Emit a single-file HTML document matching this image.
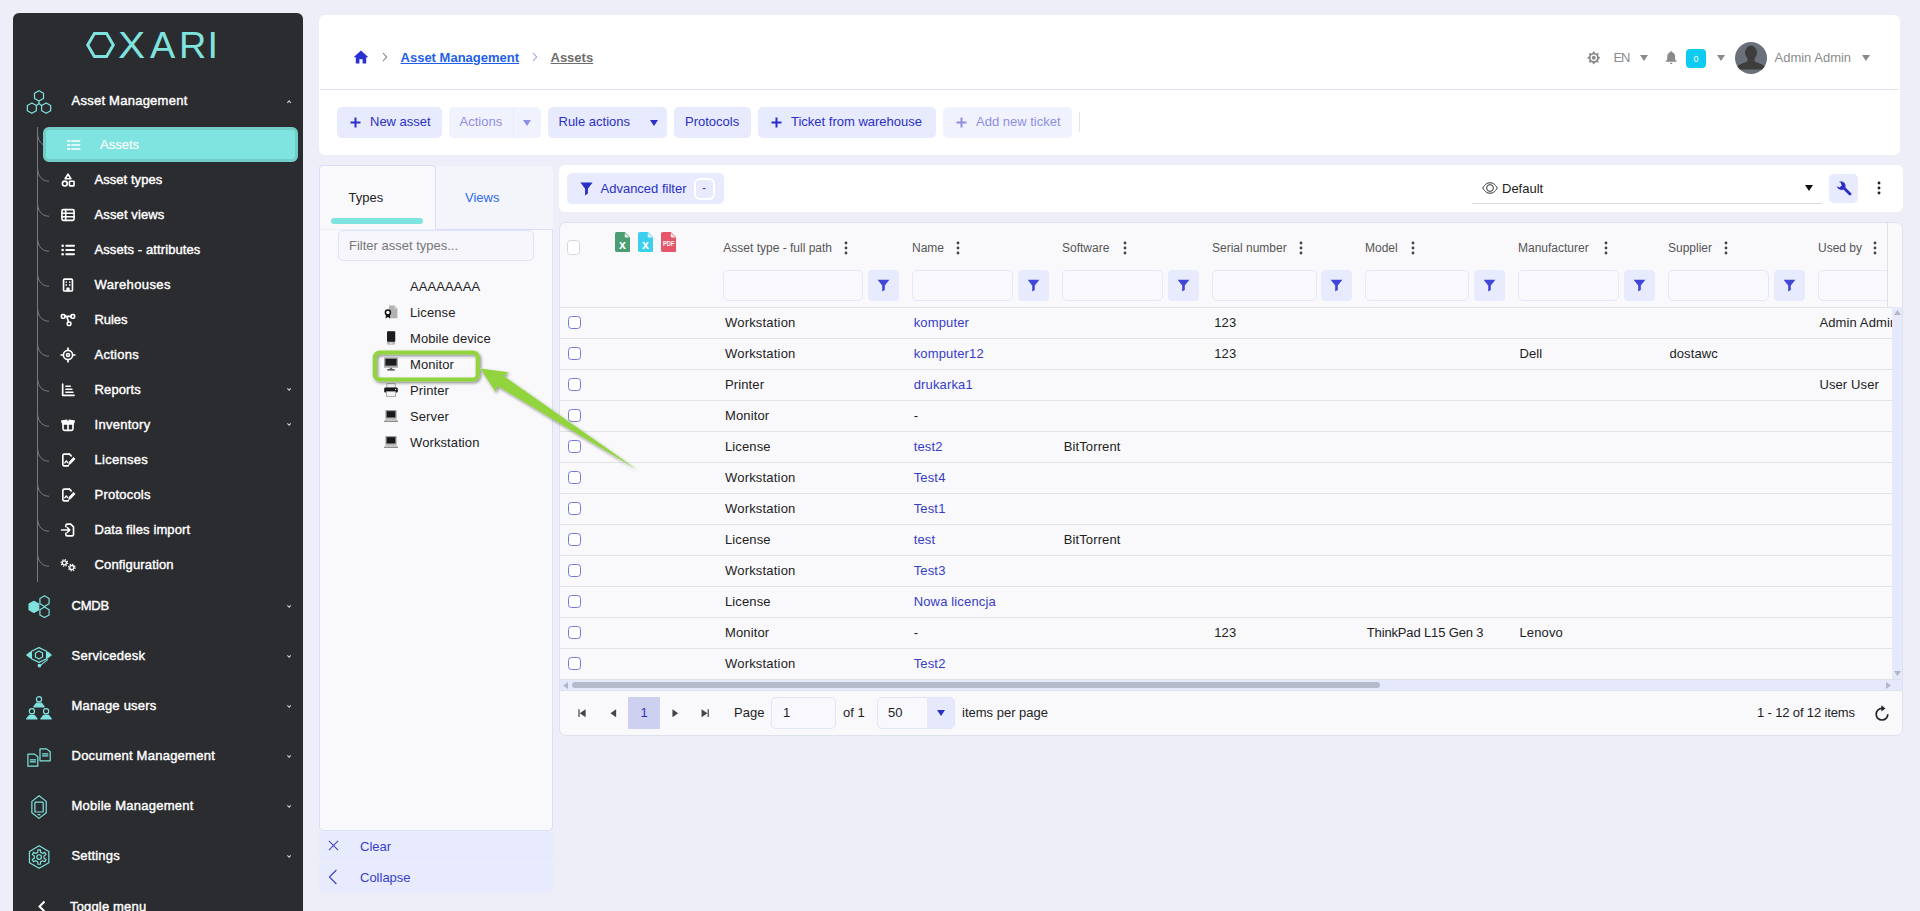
<!DOCTYPE html>
<html lang="en">
<head>
<meta charset="utf-8">
<title>Assets - Asset Management</title>
<style>
*{box-sizing:border-box;margin:0;padding:0}
html,body{width:1920px;height:911px;overflow:hidden}
body{background:#eeeef8;font-family:"Liberation Sans",sans-serif;font-size:13px;color:#222;position:relative}
a{text-decoration:none;color:inherit}
.abs{position:absolute}
svg{display:block}

/* ---------- sidebar ---------- */
#sidebar{position:absolute;left:13px;top:13px;width:290px;height:900px;background:#2b2c2f;border-radius:6px 6px 0 0;color:#fff}
#logo{position:absolute;left:70px;top:17px}
.sec{position:absolute;left:0;width:290px;height:50px}
.sec .ico{position:absolute;left:12px;top:13px;width:28px;height:28px}
.sec .lbl{position:absolute;left:58.5px;top:18px;-webkit-text-stroke:0.4px #fff;font-size:13px;line-height:16px;white-space:nowrap}
.sec .car{position:absolute;left:273px;top:24px;width:6px;height:5px}
.tree-line{position:absolute;left:24px;top:114px;width:1px;height:455px;background:#77797d}
.itm{position:absolute;left:24px;width:266px;height:35px}
.itm .br{position:absolute;left:0;top:0;width:13px;height:20px}
.itm .ico{position:absolute;left:23px;top:10px;width:16px;height:16px}
.itm .lbl{position:absolute;left:57.5px;top:10px;-webkit-text-stroke:0.4px #fff;font-size:13px;line-height:16px;white-space:nowrap}
.itm .car{position:absolute;left:249px;top:15px;width:6px;height:5px}
.itm.sel{left:30px;width:255px;background:#7fe3df;border:3px solid #72cdc9;border-radius:6px;top:114px}
.itm.sel .lbl{-webkit-text-stroke:0.15px #fff;left:54px;top:7px;letter-spacing:0}
.itm.sel .ico{left:19.5px;top:7px}

/* ---------- top panel ---------- */
#top{position:absolute;left:319px;top:15px;width:1581px;height:140px;background:#fff;border-radius:6px}
#top .divider{position:absolute;left:1px;right:1px;top:74px;height:1px;background:#dfe2ea}
.crumb{position:absolute;top:35px;font-size:13px;line-height:16px;font-weight:bold;white-space:nowrap;text-decoration:underline}
.btn{position:absolute;top:92px;height:31px;border-radius:5px;background:#e7ebfd;color:#2b2fc4;font-size:13px;line-height:31px;white-space:nowrap}
.btn.dis{background:#f0f2fe;color:#8d90e0}
.btn span{position:absolute;top:-1px}
.hdr-txt{position:absolute;top:35px;font-size:13px;line-height:16px;color:#8c8c8c;white-space:nowrap}

/* ---------- left panel ---------- */
#lp-tabs{position:absolute;left:319px;top:165px;width:234px;height:65px}
#tab-types{position:absolute;left:0;top:0;width:117px;height:65px;background:#f9f9fc;border:1px solid #d9defa;border-bottom:none;border-radius:4px 4px 0 0}
#tab-views{position:absolute;left:117px;top:1px;width:117px;height:64px;background:#f4f4fb;border-bottom:1px solid #d9defa;border-radius:0 5px 0 0}
#lp-body{position:absolute;left:319px;top:230px;width:234px;height:601px;background:#f9f9fc;border:1px solid #d9defa;border-top:none;border-radius:0 0 5px 5px}
#lp-filter{position:absolute;left:338px;top:230px;width:196px;height:31px;border:1px solid #dfe3fb;border-radius:5px;background:#f6f6fc;color:#777;font-size:13px;line-height:29px;padding-left:10px}
.tnode{position:absolute;left:410px;font-size:13px;line-height:16px;white-space:nowrap;color:#222;letter-spacing:0.1px}
.ticon{position:absolute;left:384px;width:14px;height:14px}
.lp-btn{position:absolute;left:319px;width:234px;height:30px;background:#e7ebfd;border-radius:4px;color:#3a3fc8;font-size:13px;line-height:30px}
.lp-btn span{position:absolute;left:41px;top:0}

/* ---------- grid toolbar ---------- */
#gt{position:absolute;left:559px;top:165px;width:1344px;height:47px;background:#fff;border-radius:6px}

/* ---------- grid ---------- */
#grid{position:absolute;left:559px;top:222px;width:1344px;height:514px;background:#f9f9fc;border:1px solid #dfe1ec;border-radius:7px;overflow:hidden}
.hcell{position:absolute;top:18px;font-size:12px;line-height:14px;color:#555;white-space:nowrap}
.keb{position:absolute;top:18px;width:4px;height:14px}
.finp{position:absolute;top:47px;height:31px;border:1px solid #e5e8fb;border-radius:5px;background:#f8f8fd}
.fbtn{position:absolute;top:47px;width:31px;height:31px;border-radius:4px;background:#e7ebfd}
.row{position:absolute;left:0;width:1332px;height:31px;border-top:1px solid #e2e3ea}
.row .cb{position:absolute;left:8px;top:8px;width:13px;height:13px;border:1.5px solid #7377e2;border-radius:3.5px;background:#fff}
.row span{position:absolute;top:7px;font-size:13px;line-height:16px;white-space:nowrap;color:#222;letter-spacing:0.12px}
.row a{position:absolute;top:7px;font-size:13px;line-height:16px;white-space:nowrap;color:#373cc6;letter-spacing:0.15px}
.pg{position:absolute;font-size:13px;line-height:16px;white-space:nowrap;color:#222}
</style>
</head>
<body>
<!-- SIDEBAR -->
<aside id="sidebar">
<svg id="logo" width="150" height="32" viewBox="0 0 150 32" role="img" aria-label="OXARI"><title>OXARI</title>
<polygon points="4.7,15 11.4,3.5 23.6,3.5 30.3,15 23.6,26.5 11.4,26.5" fill="none" stroke="#7fe3df" stroke-width="3"/>
<text y="28" font-family="Liberation Sans, sans-serif" font-size="37.8" fill="#7fe3df"><tspan x="35" textLength="27.2" lengthAdjust="spacingAndGlyphs">X</tspan><tspan x="67">A</tspan><tspan x="96">R</tspan><tspan x="124.5">I</tspan></text>
</svg>
<div class="tree-line"></div>
<div class="sec" style="top:62px"><svg class="ico" viewBox="0 0 28 28" fill="none" stroke="#7fe3df" stroke-width="1.2" stroke-linejoin="round" stroke-linecap="round"><polygon points="14.00,2.65 9.50,5.25 9.50,10.45 14.00,13.05 18.50,10.45 18.50,5.25"/><polygon points="6.85,14.90 2.35,17.50 2.35,22.70 6.85,25.30 11.35,22.70 11.35,17.50"/><polygon points="21.15,14.90 16.65,17.50 16.65,22.70 21.15,25.30 25.65,22.70 25.65,17.50"/><path d="M14 13.1 V15.6 L11.4 17.4 M14 15.6 L16.6 17.4"/></svg><span class="lbl" style="letter-spacing:0.25px">Asset Management</span><svg class="car" viewBox="0 0 6 5"><path d="M1.4 3.8 L3.1 1.9 L4.8 3.8" fill="none" stroke="#d0d0d0" stroke-width="1.1"/></svg></div>
<div class="itm" style="top:114px"><svg class="br" viewBox="0 0 13 20"><path d="M0.5 5 C0.5 13 4 19 12 19.3" fill="none" stroke="#77797d" stroke-width="1"/></svg></div><a class="itm sel"><svg class="ico" viewBox="0 0 18 18" fill="none" stroke="#fff" stroke-width="1.85" stroke-linejoin="round" stroke-linecap="round"><path d="M6.5 4.5 H15.5 M6.5 9 H15.5 M6.5 13.5 H15.5" stroke-width="1.7"/><path d="M2.2 4.5 H3.8 M2.2 9 H3.8 M2.2 13.5 H3.8" stroke-width="2"/></svg><span class="lbl">Assets</span></a>
<a class="itm" style="top:149px"><svg class="br" viewBox="0 0 13 20"><path d="M0.5 5 C0.5 13 4 19 12 19.3" fill="none" stroke="#77797d" stroke-width="1"/></svg><svg class="ico" viewBox="0 0 18 18" fill="none" stroke="#fff" stroke-width="1.85" stroke-linejoin="round" stroke-linecap="round"><path d="M9 2.4 L12.2 7.6 H5.8 Z"/><circle cx="5.4" cy="13" r="2.7"/><rect x="10.6" y="10.4" width="5.2" height="5.2" rx="0.6"/></svg><span class="lbl" style="letter-spacing:0.05px">Asset types</span></a>
<a class="itm" style="top:184px"><svg class="br" viewBox="0 0 13 20"><path d="M0.5 5 C0.5 13 4 19 12 19.3" fill="none" stroke="#77797d" stroke-width="1"/></svg><svg class="ico" viewBox="0 0 18 18" fill="none" stroke="#fff" stroke-width="1.85" stroke-linejoin="round" stroke-linecap="round"><rect x="2.2" y="3" width="13.6" height="12" rx="1.4"/><path d="M2.2 7 H15.8 M2.2 11 H15.8 M6.4 3 V15"/></svg><span class="lbl" style="letter-spacing:0.12px">Asset views</span></a>
<a class="itm" style="top:219px"><svg class="br" viewBox="0 0 13 20"><path d="M0.5 5 C0.5 13 4 19 12 19.3" fill="none" stroke="#77797d" stroke-width="1"/></svg><svg class="ico" viewBox="0 0 18 18" fill="none" stroke="#fff" stroke-width="1.85" stroke-linejoin="round" stroke-linecap="round"><path d="M7 4.2 H15.8 M7 9 H15.8 M7 13.8 H15.8" stroke-width="2.1"/><circle cx="3" cy="4.2" r="1.45" fill="#fff" stroke="none"/><circle cx="3" cy="9" r="1.45" fill="#fff" stroke="none"/><circle cx="3" cy="13.8" r="1.45" fill="#fff" stroke="none"/></svg><span class="lbl" style="letter-spacing:0.1px">Assets - attributes</span></a>
<a class="itm" style="top:254px"><svg class="br" viewBox="0 0 13 20"><path d="M0.5 5 C0.5 13 4 19 12 19.3" fill="none" stroke="#77797d" stroke-width="1"/></svg><svg class="ico" viewBox="0 0 18 18" fill="none" stroke="#fff" stroke-width="1.85" stroke-linejoin="round" stroke-linecap="round"><rect x="4" y="2.4" width="10" height="13.4" rx="1.2"/><path d="M7 5.6 V6 M11 5.6 V6 M7 8.8 V9.2 M11 8.8 V9.2" stroke-width="1.6"/><path d="M8 15.6 V12.6 H10 V15.6"/></svg><span class="lbl" style="letter-spacing:0.38px">Warehouses</span></a>
<a class="itm" style="top:289px"><svg class="br" viewBox="0 0 13 20"><path d="M0.5 5 C0.5 13 4 19 12 19.3" fill="none" stroke="#77797d" stroke-width="1"/></svg><svg class="ico" viewBox="0 0 18 18" fill="none" stroke="#fff" stroke-width="1.85" stroke-linejoin="round" stroke-linecap="round"><rect x="1.6" y="3" width="4" height="4" rx="1.3"/><rect x="12.4" y="3" width="4" height="4" rx="1.3"/><rect x="8.2" y="11.2" width="4" height="4" rx="1.3"/><path d="M5.6 5 H12.4 M7.6 5 L9.6 11.2"/></svg><span class="lbl" style="letter-spacing:-0.05px">Rules</span></a>
<a class="itm" style="top:324px"><svg class="br" viewBox="0 0 13 20"><path d="M0.5 5 C0.5 13 4 19 12 19.3" fill="none" stroke="#77797d" stroke-width="1"/></svg><svg class="ico" viewBox="0 0 18 18" fill="none" stroke="#fff" stroke-width="1.85" stroke-linejoin="round" stroke-linecap="round"><circle cx="9" cy="9" r="5.2"/><circle cx="9" cy="9" r="1.7"/><path d="M9 1.2 V3.6 M9 14.4 V16.8 M1.2 9 H3.6 M14.4 9 H16.8"/></svg><span class="lbl" style="letter-spacing:0.28px">Actions</span></a>
<a class="itm" style="top:359px"><svg class="br" viewBox="0 0 13 20"><path d="M0.5 5 C0.5 13 4 19 12 19.3" fill="none" stroke="#77797d" stroke-width="1"/></svg><svg class="ico" viewBox="0 0 18 18" fill="none" stroke="#fff" stroke-width="1.85" stroke-linejoin="round" stroke-linecap="round"><path d="M3 2.4 V15 H15.8" stroke-width="1.9"/><path d="M6.6 4.8 H11.6 M6.6 8.2 H13.4 M6.6 11.6 H14.6" stroke-width="1.7"/></svg><span class="lbl" style="letter-spacing:0.13px">Reports</span><svg class="car" viewBox="0 0 6 5"><path d="M1.4 1.4 L3.1 3.3 L4.8 1.4" fill="none" stroke="#d0d0d0" stroke-width="1.1"/></svg></a>
<a class="itm" style="top:394px"><svg class="br" viewBox="0 0 13 20"><path d="M0.5 5 C0.5 13 4 19 12 19.3" fill="none" stroke="#77797d" stroke-width="1"/></svg><svg class="ico" viewBox="0 0 18 18" fill="none" stroke="#fff" stroke-width="1.85" stroke-linejoin="round" stroke-linecap="round"><path d="M3.4 8 V13.2 Q3.4 15 5.2 15 H12.8 Q14.6 15 14.6 13.2 V8" /><path d="M1.6 4.4 L7.6 3.4 L9 6.4 L10.4 3.4 L16.4 4.4 L15 8 H3 Z" fill="#fff" stroke-width="1.2"/><path d="M9 8 V15"/></svg><span class="lbl" style="letter-spacing:0.27px">Inventory</span><svg class="car" viewBox="0 0 6 5"><path d="M1.4 1.4 L3.1 3.3 L4.8 1.4" fill="none" stroke="#d0d0d0" stroke-width="1.1"/></svg></a>
<a class="itm" style="top:429px"><svg class="br" viewBox="0 0 13 20"><path d="M0.5 5 C0.5 13 4 19 12 19.3" fill="none" stroke="#77797d" stroke-width="1"/></svg><svg class="ico" viewBox="0 0 18 18" fill="none" stroke="#fff" stroke-width="1.85" stroke-linejoin="round" stroke-linecap="round"><path d="M10.6 2.4 H4.8 Q3.2 2.4 3.2 4 V14 Q3.2 15.6 4.8 15.6 H9.4"/><path d="M10.6 2.4 L12.6 4.4"/><path d="M5.4 12.2 L7 10 L8.6 11.8" stroke-width="1.5"/><path d="M9.8 14 L10.4 11.2 L15.2 6 L17 7.8 L12.2 13 Z" fill="#fff" stroke-width="0.8"/></svg><span class="lbl" style="letter-spacing:0.26px">Licenses</span></a>
<a class="itm" style="top:464px"><svg class="br" viewBox="0 0 13 20"><path d="M0.5 5 C0.5 13 4 19 12 19.3" fill="none" stroke="#77797d" stroke-width="1"/></svg><svg class="ico" viewBox="0 0 18 18" fill="none" stroke="#fff" stroke-width="1.85" stroke-linejoin="round" stroke-linecap="round"><path d="M10.6 2.4 H4.8 Q3.2 2.4 3.2 4 V14 Q3.2 15.6 4.8 15.6 H9.4"/><path d="M10.6 2.4 L12.6 4.4"/><path d="M5.4 12.2 L7 10 L8.6 11.8" stroke-width="1.5"/><path d="M9.8 14 L10.4 11.2 L15.2 6 L17 7.8 L12.2 13 Z" fill="#fff" stroke-width="0.8"/></svg><span class="lbl" style="letter-spacing:0.22px">Protocols</span></a>
<a class="itm" style="top:499px"><svg class="br" viewBox="0 0 13 20"><path d="M0.5 5 C0.5 13 4 19 12 19.3" fill="none" stroke="#77797d" stroke-width="1"/></svg><svg class="ico" viewBox="0 0 18 18" fill="none" stroke="#fff" stroke-width="1.85" stroke-linejoin="round" stroke-linecap="round"><path d="M6.6 5.2 V4 Q6.6 2.4 8.2 2.4 H12 L15.2 5.4 V14 Q15.2 15.6 13.6 15.6 H8.2 Q6.6 15.6 6.6 14 V12.8"/><path d="M1.8 9 H10.6 M8.2 6.2 L11 9 L8.2 11.8"/></svg><span class="lbl" style="letter-spacing:0.1px">Data files import</span></a>
<a class="itm" style="top:534px"><svg class="br" viewBox="0 0 13 20"><path d="M0.5 5 C0.5 13 4 19 12 19.3" fill="none" stroke="#77797d" stroke-width="1"/></svg><svg class="ico" viewBox="0 0 18 18" fill="none" stroke="#fff" stroke-width="1.85" stroke-linejoin="round" stroke-linecap="round"><circle cx="4.9" cy="6.6" r="2.3" stroke-width="1.5"/><circle cx="4.9" cy="6.6" r="3.6" stroke-width="1.5" stroke-dasharray="1.41 1.41" stroke-linecap="butt"/><circle cx="13.3" cy="11.9" r="2.3" stroke-width="1.5"/><circle cx="13.3" cy="11.9" r="3.6" stroke-width="1.5" stroke-dasharray="1.41 1.41" stroke-linecap="butt"/></svg><span class="lbl" style="letter-spacing:0.14px">Configuration</span></a>
<div class="sec" style="top:567px"><svg class="ico" viewBox="0 0 28 28" fill="none" stroke="#7fe3df" stroke-width="1.2" stroke-linejoin="round" stroke-linecap="round"><polygon points="8.90,8.30 4.05,11.10 4.05,16.70 8.90,19.50 13.75,16.70 13.75,11.10" fill="#7fe3df"/><polygon points="19.50,2.80 14.91,5.45 14.91,10.75 19.50,13.40 24.09,10.75 24.09,5.45"/><polygon points="19.50,14.00 14.91,16.65 14.91,21.95 19.50,24.60 24.09,21.95 24.09,16.65"/></svg><span class="lbl" style="letter-spacing:-0.22px">CMDB</span><svg class="car" viewBox="0 0 6 5"><path d="M1.4 1.4 L3.1 3.3 L4.8 1.4" fill="none" stroke="#d0d0d0" stroke-width="1.1"/></svg></div>
<div class="sec" style="top:617px"><svg class="ico" viewBox="0 0 28 28" fill="none" stroke="#7fe3df" stroke-width="1.2" stroke-linejoin="round" stroke-linecap="round"><polygon points="14.00,4.60 6.44,8.30 6.44,15.70 14.00,19.40 21.56,15.70 21.56,8.30"/><polygon points="14.00,7.90 10.45,9.95 10.45,14.05 14.00,16.10 17.55,14.05 17.55,9.95"/><path d="M1.8 12 L5.4 9.2 V14.8 Z" fill="#7fe3df"/><path d="M26.2 12 L22.6 9.2 V14.8 Z" fill="#7fe3df"/><path d="M22.6 16.6 L15.4 22.4"/><circle cx="14.4" cy="22.6" r="1.25" fill="#7fe3df"/></svg><span class="lbl" style="letter-spacing:0.26px">Servicedesk</span><svg class="car" viewBox="0 0 6 5"><path d="M1.4 1.4 L3.1 3.3 L4.8 1.4" fill="none" stroke="#d0d0d0" stroke-width="1.1"/></svg></div>
<div class="sec" style="top:667px"><svg class="ico" viewBox="0 0 28 28" fill="none" stroke="#7fe3df" stroke-width="1.2" stroke-linejoin="round" stroke-linecap="round"><circle cx="14" cy="6.2" r="2.6"/><path d="M8.8 13.8 L11.6 10.2 H16.4 L19.2 13.8 Z" fill="#7fe3df"/><circle cx="6.9" cy="18.3" r="2.6"/><path d="M1.7000000000000002 25.9 L4.5 22.3 H9.3 L12.100000000000001 25.9 Z" fill="#7fe3df"/><circle cx="21.1" cy="18.3" r="2.6"/><path d="M15.900000000000002 25.9 L18.700000000000003 22.3 H23.5 L26.3 25.9 Z" fill="#7fe3df"/></svg><span class="lbl" style="letter-spacing:0.22px">Manage users</span><svg class="car" viewBox="0 0 6 5"><path d="M1.4 1.4 L3.1 3.3 L4.8 1.4" fill="none" stroke="#d0d0d0" stroke-width="1.1"/></svg></div>
<div class="sec" style="top:717px"><svg class="ico" viewBox="0 0 28 28" fill="none" stroke="#7fe3df" stroke-width="1.2" stroke-linejoin="round" stroke-linecap="round"><path d="M2.9 11.1 H9.6 L12.8 13.8 V23.2 H2.9 Z"/><path d="M5.2 16.8 H10.6 M5.2 18.9 H10.6"/><path d="M15 5.9 H21.6 L25.2 8.8 V17.8 H15 Z"/><path d="M17.6 10.9 H22.8 M17.6 12.9 H22.8"/></svg><span class="lbl" style="letter-spacing:0.25px">Document Management</span><svg class="car" viewBox="0 0 6 5"><path d="M1.4 1.4 L3.1 3.3 L4.8 1.4" fill="none" stroke="#d0d0d0" stroke-width="1.1"/></svg></div>
<div class="sec" style="top:767px"><svg class="ico" viewBox="0 0 28 28" fill="none" stroke="#7fe3df" stroke-width="1.2" stroke-linejoin="round" stroke-linecap="round"><polygon points="14.05,2.75 6.86,8.40 6.86,19.70 14.05,25.35 21.24,19.70 21.24,8.40"/><rect x="9.9" y="9.2" width="8.3" height="9.8" rx="0.6"/><path d="M13.1 21.7 H15"/></svg><span class="lbl" style="letter-spacing:0.25px">Mobile Management</span><svg class="car" viewBox="0 0 6 5"><path d="M1.4 1.4 L3.1 3.3 L4.8 1.4" fill="none" stroke="#d0d0d0" stroke-width="1.1"/></svg></div>
<div class="sec" style="top:817px"><svg class="ico" viewBox="0 0 28 28" fill="none" stroke="#7fe3df" stroke-width="1.2" stroke-linejoin="round" stroke-linecap="round"><polygon points="14.15,2.85 4.45,8.45 4.45,19.65 14.15,25.25 23.85,19.65 23.85,8.45"/><polygon points="12.73,9.26 12.93,6.85 15.37,6.85 15.57,9.26 17.59,10.42 19.77,9.40 20.99,11.51 19.01,12.88 19.01,15.22 20.99,16.59 19.77,18.70 17.59,17.68 15.57,18.84 15.37,21.25 12.93,21.25 12.73,18.84 10.71,17.68 8.53,18.70 7.31,16.59 9.29,15.22 9.29,12.88 7.31,11.51 8.53,9.40 10.71,10.42"/><circle cx="14.15" cy="14.05" r="2.3"/></svg><span class="lbl" style="letter-spacing:0.17px">Settings</span><svg class="car" viewBox="0 0 6 5"><path d="M1.4 1.4 L3.1 3.3 L4.8 1.4" fill="none" stroke="#d0d0d0" stroke-width="1.1"/></svg></div>
<div class="sec" style="top:868px"><svg class="abs" style="left:25px;top:19px" width="8" height="13" viewBox="0 0 8 13"><path d="M6.5 1.5 L1.5 6.5 L6.5 11.5" fill="none" stroke="#fff" stroke-width="2"/></svg><span class="lbl" style="left:57px;letter-spacing:0.17px">Toggle menu</span></div>
</aside>
<!-- TOP PANEL : origin page (319,15) -->
<section id="top">
  <div class="divider"></div>

  <!-- breadcrumb -->
  <svg class="abs" style="left:34px;top:35px" width="16" height="14" viewBox="0 0 16 14"><path d="M8 0.6 L0.6 7.2 H2.8 V13.4 H6.4 V9.2 H9.6 V13.4 H13.2 V7.2 H15.4 Z" fill="#2a2fd0"/></svg>
  <svg class="abs" style="left:63px;top:37px" width="6" height="10" viewBox="0 0 6 10"><path d="M1 1 L4.6 5 L1 9" fill="none" stroke="#7a7a7a" stroke-width="1.1"/></svg>
  <a class="crumb" style="left:81.5px;color:#1f5fe8;letter-spacing:0.01px">Asset Management</a>
  <svg class="abs" style="left:213px;top:37px" width="6" height="10" viewBox="0 0 6 10"><path d="M1 1 L4.6 5 L1 9" fill="none" stroke="#9a9de8" stroke-width="1.1"/></svg>
  <a class="crumb" style="left:231.5px;color:#6d6d6d">Assets</a>

  <!-- header right -->
  <svg class="abs" style="left:1267.5px;top:36px" width="13.6" height="13.6" viewBox="0 0 14 14"><polygon points="7.00,0.10 8.88,2.47 11.88,2.12 11.53,5.12 13.90,7.00 11.53,8.88 11.88,11.88 8.88,11.53 7.00,13.90 5.12,11.53 2.12,11.88 2.47,8.88 0.10,7.00 2.47,5.12 2.12,2.12 5.12,2.47" fill="#8a8a8a"/><circle cx="7" cy="7" r="3.3" fill="#fff"/><circle cx="7" cy="7" r="2" fill="#8a8a8a"/></svg>
  <span class="hdr-txt" style="left:1294.5px;letter-spacing:-1.1px">EN</span>
  <svg class="abs" style="left:1321px;top:40px" width="8" height="6" viewBox="0 0 8 6"><path d="M0 0 H8 L4 6 Z" fill="#8a8a8a"/></svg>
  <svg class="abs" style="left:1345.6px;top:36px" width="12.4" height="13.4" viewBox="0 0 12 14"><path d="M6 0.3 C6.7 0.3 7.1 0.8 7.1 1.4 C9 1.9 10.1 3.6 10.1 5.6 V8.2 C10.1 9.4 10.8 10 11.7 10.6 V11.3 H0.3 V10.6 C1.2 10 1.9 9.4 1.9 8.2 V5.6 C1.9 3.6 3 1.9 4.9 1.4 C4.9 0.8 5.3 0.3 6 0.3 Z M4.7 12.2 H7.3 C7.3 13 6.8 13.6 6 13.6 C5.2 13.6 4.7 13 4.7 12.2 Z" fill="#8a8a8a"/></svg>
  <span class="abs" style="left:1367px;top:34px;width:20px;height:19px;border-radius:4px;background:#0dcaf0;color:#fff;font-size:9px;line-height:21px;text-align:center">0</span>
  <svg class="abs" style="left:1398px;top:40px" width="8" height="6" viewBox="0 0 8 6"><path d="M0 0 H8 L4 6 Z" fill="#8a8a8a"/></svg>
  <svg class="abs" style="left:1416px;top:27px" width="32" height="32" viewBox="0 0 32 32"><defs><clipPath id="avc"><circle cx="16" cy="16" r="16"/></clipPath></defs><circle cx="16" cy="16" r="16" fill="#6b717b"/><g clip-path="url(#avc)" fill="#3d3d3d"><ellipse cx="16" cy="10.6" rx="6" ry="7"/><path d="M12.4 15 H19.6 V19 C21.4 21 27 21.6 29.4 24 L30 27.6 H2 L2.6 24 C5 21.6 10.6 21 12.4 19 Z"/></g></svg>
  <span class="hdr-txt" style="left:1455.5px">Admin Admin</span>
  <svg class="abs" style="left:1543px;top:40px" width="8" height="6" viewBox="0 0 8 6"><path d="M0 0 H8 L4 6 Z" fill="#8a8a8a"/></svg>

  <!-- action buttons -->
  <a class="btn" style="left:18px;width:105px">
    <svg class="abs" style="left:13px;top:10px" width="11" height="11" viewBox="0 0 11 11"><path d="M5.5 0.5 V10.5 M0.5 5.5 H10.5" stroke="#2b2fc4" stroke-width="2" fill="none"/></svg>
    <span style="left:33px">New asset</span></a>
  <a class="btn dis" style="left:130px;width:92px"><span style="left:10.5px">Actions</span>
    <i class="abs" style="left:64px;top:0;width:1px;height:31px;background:#e9ebfb"></i>
    <svg class="abs" style="left:74px;top:13px" width="8" height="6" viewBox="0 0 8 6"><path d="M0 0 H8 L4 6 Z" fill="#8d90e0"/></svg></a>
  <a class="btn" style="left:229px;width:119px"><span style="left:10.5px">Rule actions</span>
    <svg class="abs" style="left:102px;top:13px" width="8" height="6" viewBox="0 0 8 6"><path d="M0 0 H8 L4 6 Z" fill="#2b2fc4"/></svg></a>
  <a class="btn" style="left:355px;width:77px"><span style="left:11px">Protocols</span></a>
  <a class="btn" style="left:439px;width:178px">
    <svg class="abs" style="left:13px;top:10px" width="11" height="11" viewBox="0 0 11 11"><path d="M5.5 0.5 V10.5 M0.5 5.5 H10.5" stroke="#2b2fc4" stroke-width="2" fill="none"/></svg>
    <span style="left:33px">Ticket from warehouse</span></a>
  <a class="btn dis" style="left:624px;width:129px">
    <svg class="abs" style="left:13px;top:10px" width="11" height="11" viewBox="0 0 11 11"><path d="M5.5 0.5 V10.5 M0.5 5.5 H10.5" stroke="#8d90e0" stroke-width="2" fill="none"/></svg>
    <span style="left:33px">Add new ticket</span></a>
  <i class="abs" style="left:760px;top:97px;width:1px;height:20px;background:#e3e3ea"></i>
</section>
<!-- LEFT PANEL (page coordinates) -->
<div id="lp-tabs">
  <div id="tab-types"><span class="abs" style="left:28.5px;top:24px;font-size:13px;line-height:16px;color:#222">Types</span>
    <i class="abs" style="left:11px;top:52px;width:92px;height:6px;border-radius:3px;background:#7fe3df"></i></div>
  <div id="tab-views"><span class="abs" style="left:29px;top:24px;font-size:13px;line-height:16px;color:#2f6bf0">Views</span></div>
</div>
<div id="lp-body"></div>
<i class="abs" style="left:320px;top:229px;width:116px;height:1px;background:#eceefa"></i>
<div id="lp-filter">Filter asset types...</div>

<span class="tnode" style="top:279px">AAAAAAAA</span>
<span class="tnode" style="top:305px">License</span>
<span class="tnode" style="top:331px">Mobile device</span>
<span class="tnode" style="top:357px">Monitor</span>
<span class="tnode" style="top:383px">Printer</span>
<span class="tnode" style="top:409px">Server</span>
<span class="tnode" style="top:435px">Workstation</span>

<!-- tree icons -->
<svg class="ticon" style="top:305px" viewBox="0 0 14 14"><path d="M5 0.6 H10.6 L13.4 3.4 V13.2 H5 Z" fill="#b2b2b2"/><path d="M10.6 0.6 V3.4 H13.4 Z" fill="#dedede"/><circle cx="3.9" cy="7.4" r="2.5" fill="#fff" stroke="#111" stroke-width="1.5"/><path d="M2 9.8 L1.5 13.4 L3.9 12 L6.2 13.4 L5.8 9.8 Z" fill="#111"/></svg>
<svg class="ticon" style="top:331px" viewBox="0 0 14 14"><rect x="3" y="0.2" width="8.2" height="13.6" rx="1.3" fill="#b8b8b8"/><rect x="3" y="0.2" width="8.2" height="10.6" rx="1" fill="#1b1b20"/><rect x="5.8" y="11.8" width="2.6" height="1" rx="0.5" fill="#ececec"/></svg>
<svg class="ticon" style="top:357px" viewBox="0 0 14 14"><rect x="0" y="0.6" width="14" height="10.2" rx="0.9" fill="#a6a6a6"/><rect x="1.4" y="1.8" width="11.2" height="6.8" fill="#1b1b20"/><rect x="5.8" y="10.8" width="2.4" height="1.6" fill="#6a6a6a"/><rect x="3.2" y="12.2" width="7.6" height="1.2" rx="0.4" fill="#2c2c2c"/></svg>
<svg class="ticon" style="top:383px" viewBox="0 0 14 14"><rect x="2.8" y="0.6" width="8.4" height="4.4" fill="#f4f4f4" stroke="#a2a2a2" stroke-width="0.9"/><rect x="0.2" y="4.6" width="13.6" height="5" rx="1.3" fill="#17171a"/><rect x="2.6" y="8.6" width="8.8" height="4.8" fill="#f4f4f4" stroke="#a2a2a2" stroke-width="0.9"/><circle cx="11.6" cy="6.4" r="0.7" fill="#e5e5e5"/></svg>
<svg class="ticon" style="top:409px" viewBox="0 0 14 14"><rect x="1.4" y="1" width="11.2" height="8.8" rx="0.7" fill="#9c9c9c"/><rect x="2.7" y="2.2" width="8.6" height="6.2" fill="#17171c"/><path d="M0 12 L1.6 9.8 H12.4 L14 12 V12.9 H0 Z" fill="#c4c4c4"/><rect x="0" y="12.1" width="14" height="0.9" fill="#8a8a8a"/></svg>
<svg class="ticon" style="top:435px" viewBox="0 0 14 14"><rect x="1.4" y="1" width="11.2" height="8.8" rx="0.7" fill="#9c9c9c"/><rect x="2.7" y="2.2" width="8.6" height="6.2" fill="#17171c"/><path d="M0 12 L1.6 9.8 H12.4 L14 12 V12.9 H0 Z" fill="#c4c4c4"/><rect x="0" y="12.1" width="14" height="0.9" fill="#8a8a8a"/></svg>

<!-- clear / collapse -->
<a class="lp-btn" style="top:832px"><svg class="abs" style="left:9px;top:8px" width="11" height="11" viewBox="0 0 12 12"><path d="M1 1 L11 11 M11 1 L1 11" stroke="#3a3fc8" stroke-width="1.1" fill="none"/></svg><span>Clear</span></a>
<a class="lp-btn" style="top:863px"><svg class="abs" style="left:9px;top:6px" width="10" height="16" viewBox="0 0 10 16"><path d="M8.4 1 L1.4 8 L8.4 15" stroke="#3a3fc8" stroke-width="1.1" fill="none"/></svg><span>Collapse</span></a>
<!-- GRID TOOLBAR : origin page (559,165) -->
<section id="gt">
  <a class="abs" style="left:8px;top:8px;width:157px;height:31px;border-radius:5px;background:#e7ebfd;color:#2b2fc4;font-size:13px;line-height:31px">
    <svg class="abs" style="left:12.5px;top:8.5px" width="13" height="14" viewBox="0 0 13 14"><path d="M0.4 0.6 H12.6 L7.9 6.8 V11.6 L5.1 13.6 V6.8 Z" fill="#2b2fc4"/></svg>
    <span class="abs" style="left:33.5px;top:0;white-space:nowrap">Advanced filter</span>
    <span class="abs" style="left:126.5px;top:4.5px;width:21px;height:22px;border:2px solid #fff;border-radius:6px;color:#3a3fc8;font-size:12px;line-height:17px;text-align:center">-</span></a>
  <div class="abs" style="left:913px;top:37.5px;width:350px;height:1px;background:#d9d9de"></div>
  <svg class="abs" style="left:922.5px;top:17px" width="16" height="12" viewBox="0 0 16 12"><path d="M0.7 6 C3 2 5.4 0.8 8 0.8 C10.6 0.8 13 2 15.3 6 C13 10 10.6 11.2 8 11.2 C5.4 11.2 3 10 0.7 6 Z" fill="none" stroke="#333" stroke-width="1"/><circle cx="8" cy="6" r="3.4" fill="none" stroke="#333" stroke-width="1"/></svg>
  <span class="abs" style="left:943px;top:15.5px;font-size:13px;line-height:16px;color:#222">Default</span>
  <svg class="abs" style="left:1246px;top:20px" width="8" height="6" viewBox="0 0 8 6"><path d="M0 0 H8 L4 6 Z" fill="#111"/></svg>
  <a class="abs" style="left:1270px;top:9px;width:29px;height:29px;border-radius:5px;background:#e7ebfd">
    <svg class="abs" style="left:7px;top:7px" width="16" height="16" viewBox="0 0 16 16"><path d="M5.2 0.6 C7.6 0.6 9.6 2.6 9.6 5 C9.6 5.5 9.5 6 9.4 6.4 L15 12 C15.6 12.6 15.6 13.4 15 14 C14.4 14.6 13.6 14.6 13 14 L7.4 8.4 C6.6 8.8 5.6 9 4.4 8.8 C2.6 8.4 1.2 7 0.8 5.2 L3.6 6.6 L5.8 4.6 L4.6 1.6 L3 0.9 C3.7 0.7 4.4 0.6 5.2 0.6 Z" fill="#2b2fc4"/></svg></a>
  <svg class="abs" style="left:1318px;top:16px" width="4" height="14" viewBox="0 0 4 14"><circle cx="2" cy="2" r="1.45" fill="#222"/><circle cx="2" cy="7" r="1.45" fill="#222"/><circle cx="2" cy="12" r="1.45" fill="#222"/></svg>
</section>

<!-- GRID : inner origin page (560,223) -->
<section id="grid">
  <span class="abs" style="left:7px;top:17px;width:13px;height:15px;border:1px solid #d6d6de;border-radius:3.5px;background:#fff"></span>
  <svg class="abs" style="left:54.6px;top:9.2px" width="15.4" height="20" viewBox="0 0 15.4 20"><path d="M1.8 0 H9.8 L15.4 5.6 V18.2 Q15.4 20 13.6 20 H1.8 Q0 20 0 18.2 V1.8 Q0 0 1.8 0 Z" fill="#4a9e72"/><path d="M9.8 1 V4.2 Q9.8 5.6 11.2 5.6 H14.4 Z" fill="#fff" fill-opacity="0.9"/><text x="4.1" y="17.4" font-family="Liberation Sans, sans-serif" font-weight="bold" font-size="12.5" fill="#fff">x</text></svg>
  <svg class="abs" style="left:77.7px;top:9.2px" width="15.4" height="20" viewBox="0 0 15.4 20"><path d="M1.8 0 H9.8 L15.4 5.6 V18.2 Q15.4 20 13.6 20 H1.8 Q0 20 0 18.2 V1.8 Q0 0 1.8 0 Z" fill="#3dd0ee"/><path d="M9.8 1 V4.2 Q9.8 5.6 11.2 5.6 H14.4 Z" fill="#fff" fill-opacity="0.9"/><text x="4.1" y="17.4" font-family="Liberation Sans, sans-serif" font-weight="bold" font-size="12.5" fill="#fff">x</text></svg>
  <svg class="abs" style="left:100.8px;top:9.2px" width="15.4" height="20" viewBox="0 0 15.4 20"><path d="M1.8 0 H9.8 L15.4 5.6 V18.2 Q15.4 20 13.6 20 H1.8 Q0 20 0 18.2 V1.8 Q0 0 1.8 0 Z" fill="#e5566b"/><path d="M9.8 1 V4.2 Q9.8 5.6 11.2 5.6 H14.4 Z" fill="#fff" fill-opacity="0.9"/><text x="1.9" y="17.4" font-family="Liberation Sans, sans-serif" font-weight="bold" font-size="7.6" fill="#fff" textLength="11.6" lengthAdjust="spacingAndGlyphs" transform="translate(0 -3.4)">PDF</text></svg>
  <span class="hcell" style="left:163.3px">Asset type - full path</span><svg class="keb" style="left:284.2px" viewBox="0 0 4 14"><circle cx="2" cy="2" r="1.4" fill="#444"/><circle cx="2" cy="7" r="1.4" fill="#444"/><circle cx="2" cy="12" r="1.4" fill="#444"/></svg><span class="finp" style="left:163.0px;width:140.3px"></span><a class="fbtn" style="left:308px"><svg class="abs" style="left:9px;top:9px" width="13" height="13" viewBox="0 0 13 13"><path d="M0.6 0.8 H12.4 L7.8 6.6 V11 L5.2 12.6 V6.6 Z" fill="#4146d6"/></svg></a>
  <span class="hcell" style="left:352px">Name</span><svg class="keb" style="left:396.3px" viewBox="0 0 4 14"><circle cx="2" cy="2" r="1.4" fill="#444"/><circle cx="2" cy="7" r="1.4" fill="#444"/><circle cx="2" cy="12" r="1.4" fill="#444"/></svg><span class="finp" style="left:351.7px;width:101.4px"></span><a class="fbtn" style="left:458px"><svg class="abs" style="left:9px;top:9px" width="13" height="13" viewBox="0 0 13 13"><path d="M0.6 0.8 H12.4 L7.8 6.6 V11 L5.2 12.6 V6.6 Z" fill="#4146d6"/></svg></a>
  <span class="hcell" style="left:502px">Software</span><svg class="keb" style="left:563.3px" viewBox="0 0 4 14"><circle cx="2" cy="2" r="1.4" fill="#444"/><circle cx="2" cy="7" r="1.4" fill="#444"/><circle cx="2" cy="12" r="1.4" fill="#444"/></svg><span class="finp" style="left:501.7px;width:101.5px"></span><a class="fbtn" style="left:608.3px"><svg class="abs" style="left:9px;top:9px" width="13" height="13" viewBox="0 0 13 13"><path d="M0.6 0.8 H12.4 L7.8 6.6 V11 L5.2 12.6 V6.6 Z" fill="#4146d6"/></svg></a>
  <span class="hcell" style="left:652px">Serial number</span><svg class="keb" style="left:739.2px" viewBox="0 0 4 14"><circle cx="2" cy="2" r="1.4" fill="#444"/><circle cx="2" cy="7" r="1.4" fill="#444"/><circle cx="2" cy="12" r="1.4" fill="#444"/></svg><span class="finp" style="left:651.7px;width:105px"></span><a class="fbtn" style="left:761px"><svg class="abs" style="left:9px;top:9px" width="13" height="13" viewBox="0 0 13 13"><path d="M0.6 0.8 H12.4 L7.8 6.6 V11 L5.2 12.6 V6.6 Z" fill="#4146d6"/></svg></a>
  <span class="hcell" style="left:805px">Model</span><svg class="keb" style="left:851px" viewBox="0 0 4 14"><circle cx="2" cy="2" r="1.4" fill="#444"/><circle cx="2" cy="7" r="1.4" fill="#444"/><circle cx="2" cy="12" r="1.4" fill="#444"/></svg><span class="finp" style="left:804.7px;width:104.6px"></span><a class="fbtn" style="left:914px"><svg class="abs" style="left:9px;top:9px" width="13" height="13" viewBox="0 0 13 13"><path d="M0.6 0.8 H12.4 L7.8 6.6 V11 L5.2 12.6 V6.6 Z" fill="#4146d6"/></svg></a>
  <span class="hcell" style="left:958px">Manufacturer</span><svg class="keb" style="left:1044px" viewBox="0 0 4 14"><circle cx="2" cy="2" r="1.4" fill="#444"/><circle cx="2" cy="7" r="1.4" fill="#444"/><circle cx="2" cy="12" r="1.4" fill="#444"/></svg><span class="finp" style="left:957.7px;width:101.6px"></span><a class="fbtn" style="left:1064px"><svg class="abs" style="left:9px;top:9px" width="13" height="13" viewBox="0 0 13 13"><path d="M0.6 0.8 H12.4 L7.8 6.6 V11 L5.2 12.6 V6.6 Z" fill="#4146d6"/></svg></a>
  <span class="hcell" style="left:1108px">Supplier</span><svg class="keb" style="left:1164px" viewBox="0 0 4 14"><circle cx="2" cy="2" r="1.4" fill="#444"/><circle cx="2" cy="7" r="1.4" fill="#444"/><circle cx="2" cy="12" r="1.4" fill="#444"/></svg><span class="finp" style="left:1107.7px;width:101.6px"></span><a class="fbtn" style="left:1214px"><svg class="abs" style="left:9px;top:9px" width="13" height="13" viewBox="0 0 13 13"><path d="M0.6 0.8 H12.4 L7.8 6.6 V11 L5.2 12.6 V6.6 Z" fill="#4146d6"/></svg></a>
  <span class="hcell" style="left:1258px">Used by</span><svg class="keb" style="left:1313px" viewBox="0 0 4 14"><circle cx="2" cy="2" r="1.4" fill="#444"/><circle cx="2" cy="7" r="1.4" fill="#444"/><circle cx="2" cy="12" r="1.4" fill="#444"/></svg><span class="finp" style="left:1257.7px;width:101.6px"></span><a class="fbtn" style="left:1364px"><svg class="abs" style="left:9px;top:9px" width="13" height="13" viewBox="0 0 13 13"><path d="M0.6 0.8 H12.4 L7.8 6.6 V11 L5.2 12.6 V6.6 Z" fill="#4146d6"/></svg></a>
  <div class="abs" style="left:1327px;top:0;width:15px;height:84px;background:#f9f9fc;border-left:1px solid #dfe1ec"></div>
  <div class="row" style="top:84px"><i class="cb"></i><span style="left:165px;letter-spacing:0.19px">Workstation</span><a style="left:353.7px">komputer</a><span style="left:654.2px">123</span><span style="left:1259.4px">Admin Admin</span></div>
  <div class="row" style="top:115px"><i class="cb"></i><span style="left:165px;letter-spacing:0.19px">Workstation</span><a style="left:353.7px">komputer12</a><span style="left:654.2px">123</span><span style="left:959.5px">Dell</span><span style="left:1109.4px">dostawc</span></div>
  <div class="row" style="top:146px"><i class="cb"></i><span style="left:165px">Printer</span><a style="left:353.7px">drukarka1</a><span style="left:1259.4px">User User</span></div>
  <div class="row" style="top:177px"><i class="cb"></i><span style="left:165px">Monitor</span><span style="left:353.7px">-</span></div>
  <div class="row" style="top:208px"><i class="cb"></i><span style="left:165px">License</span><a style="left:353.7px">test2</a><span style="left:503.7px">BitTorrent</span></div>
  <div class="row" style="top:239px"><i class="cb"></i><span style="left:165px;letter-spacing:0.19px">Workstation</span><a style="left:353.7px">Test4</a></div>
  <div class="row" style="top:270px"><i class="cb"></i><span style="left:165px;letter-spacing:0.19px">Workstation</span><a style="left:353.7px">Test1</a></div>
  <div class="row" style="top:301px"><i class="cb"></i><span style="left:165px">License</span><a style="left:353.7px">test</a><span style="left:503.7px">BitTorrent</span></div>
  <div class="row" style="top:332px"><i class="cb"></i><span style="left:165px;letter-spacing:0.19px">Workstation</span><a style="left:353.7px">Test3</a></div>
  <div class="row" style="top:363px"><i class="cb"></i><span style="left:165px">License</span><a style="left:353.7px">Nowa licencja</a></div>
  <div class="row" style="top:394px"><i class="cb"></i><span style="left:165px">Monitor</span><span style="left:353.7px">-</span><span style="left:654.2px">123</span><span style="left:806.8px;letter-spacing:-0.15px">ThinkPad L15 Gen 3</span><span style="left:959.5px">Lenovo</span></div>
  <div class="row" style="top:425px"><i class="cb"></i><span style="left:165px;letter-spacing:0.19px">Workstation</span><a style="left:353.7px">Test2</a></div>
  <div class="abs" style="left:1332px;top:84px;width:10px;height:373px;background:#e5e9fb">
    <svg class="abs" style="left:2px;top:3px" width="7" height="5" viewBox="0 0 7 5"><path d="M3.5 0 L7 5 H0 Z" fill="#b3b7c6"/></svg>
    <svg class="abs" style="left:2px;top:364px" width="7" height="5" viewBox="0 0 7 5"><path d="M0 0 H7 L3.5 5 Z" fill="#b3b7c6"/></svg></div>
  <div class="abs" style="left:0;top:456px;width:1342px;height:11px;background:#e5e9fb;border-top:1px solid #e0e2ea">
    <svg class="abs" style="left:3px;top:2px" width="5" height="7" viewBox="0 0 5 7"><path d="M0 3.5 L5 0 V7 Z" fill="#b3b7c6"/></svg>
    <i class="abs" style="left:12px;top:2px;width:808px;height:6px;border-radius:3px;background:#b5bbcb"></i>
    <svg class="abs" style="left:1326px;top:2px" width="5" height="7" viewBox="0 0 5 7"><path d="M5 3.5 L0 0 V7 Z" fill="#b3b7c6"/></svg></div>
  <div class="abs" style="left:0;top:467px;width:1342px;height:1px;background:#e0e2ea"></div>
  <svg class="abs" style="left:18px;top:485.8px" width="8.2" height="8.6" viewBox="0 0 9 10"><path d="M0.2 0.4 H1.6 V9.6 H0.2 Z M8.6 0.4 V9.6 L1.8 5 Z" fill="#444"/></svg>
  <svg class="abs" style="left:50px;top:485.8px" width="6.6" height="8.6" viewBox="0 0 7 10"><path d="M6.8 0.4 V9.6 L0.2 5 Z" fill="#444"/></svg>
  <span class="abs" style="left:68px;top:474px;width:32px;height:32px;background:#ced0f0;color:#2b2fc4;font-size:13px;line-height:32px;text-align:center">1</span>
  <svg class="abs" style="left:112.2px;top:485.8px" width="6.6" height="8.6" viewBox="0 0 7 10"><path d="M0.2 0.4 V9.6 L6.8 5 Z" fill="#444"/></svg>
  <svg class="abs" style="left:141.2px;top:485.8px" width="8.2" height="8.6" viewBox="0 0 9 10"><path d="M7.4 0.4 H8.8 V9.6 H7.4 Z M0.4 0.4 V9.6 L7.2 5 Z" fill="#444"/></svg>
  <span class="pg" style="left:174px;top:482px">Page</span>
  <span class="abs" style="left:211px;top:474px;width:65px;height:32px;border:1px solid #e1e5fa;border-radius:5px;background:#f8f8fd;font-size:13px;line-height:30px;padding-left:11px;color:#222">1</span>
  <span class="pg" style="left:283px;top:482px">of 1</span>
  <span class="abs" style="left:317px;top:474px;width:78px;height:32px;border:1px solid #e1e5fa;border-radius:5px;background:#f8f8fd;font-size:13px;line-height:30px;padding-left:10px;color:#222;overflow:hidden">50<i class="abs" style="left:49px;top:0;width:28px;height:30px;background:#e5e9fb"></i><svg class="abs" style="left:59px;top:12px" width="8" height="6" viewBox="0 0 8 6"><path d="M0 0 H8 L4 6 Z" fill="#2b2fc4"/></svg></span>
  <span class="pg" style="left:402px;top:482px">items per page</span>
  <span class="pg" style="left:1197px;top:482px;letter-spacing:-0.15px">1 - 12 of 12 items</span>
  <svg class="abs" style="left:1314px;top:482px" width="16" height="17" viewBox="0 0 16 17"><path d="M8 3.4 A5.8 5.8 0 1 0 13.8 9.2" fill="none" stroke="#222" stroke-width="1.7"/><path d="M7.4 0.2 L11.4 3.4 L7.4 6.6 Z" fill="#222"/></svg>
</section>
<!-- HIGHLIGHT + ARROW overlay (page coordinates) -->
<svg class="abs" style="left:0;top:0;pointer-events:none" width="1920" height="911" viewBox="0 0 1920 911">
  <defs><filter id="ds" x="-10%" y="-10%" width="130%" height="130%"><feDropShadow dx="1.2" dy="1.6" stdDeviation="1.6" flood-color="#000" flood-opacity="0.45"/></filter></defs>
  <g filter="url(#ds)">
    <rect x="374.8" y="352.5" width="103" height="27" rx="5" fill="none" stroke="#92d43e" stroke-width="4.2"/>
    <polygon points="480.3,368.4 508.7,372.3 503.3,375.7 637,469.5 497.5,386.1 495.6,392" fill="#92d43e"/>
  </g>
</svg>

</body>
</html>
